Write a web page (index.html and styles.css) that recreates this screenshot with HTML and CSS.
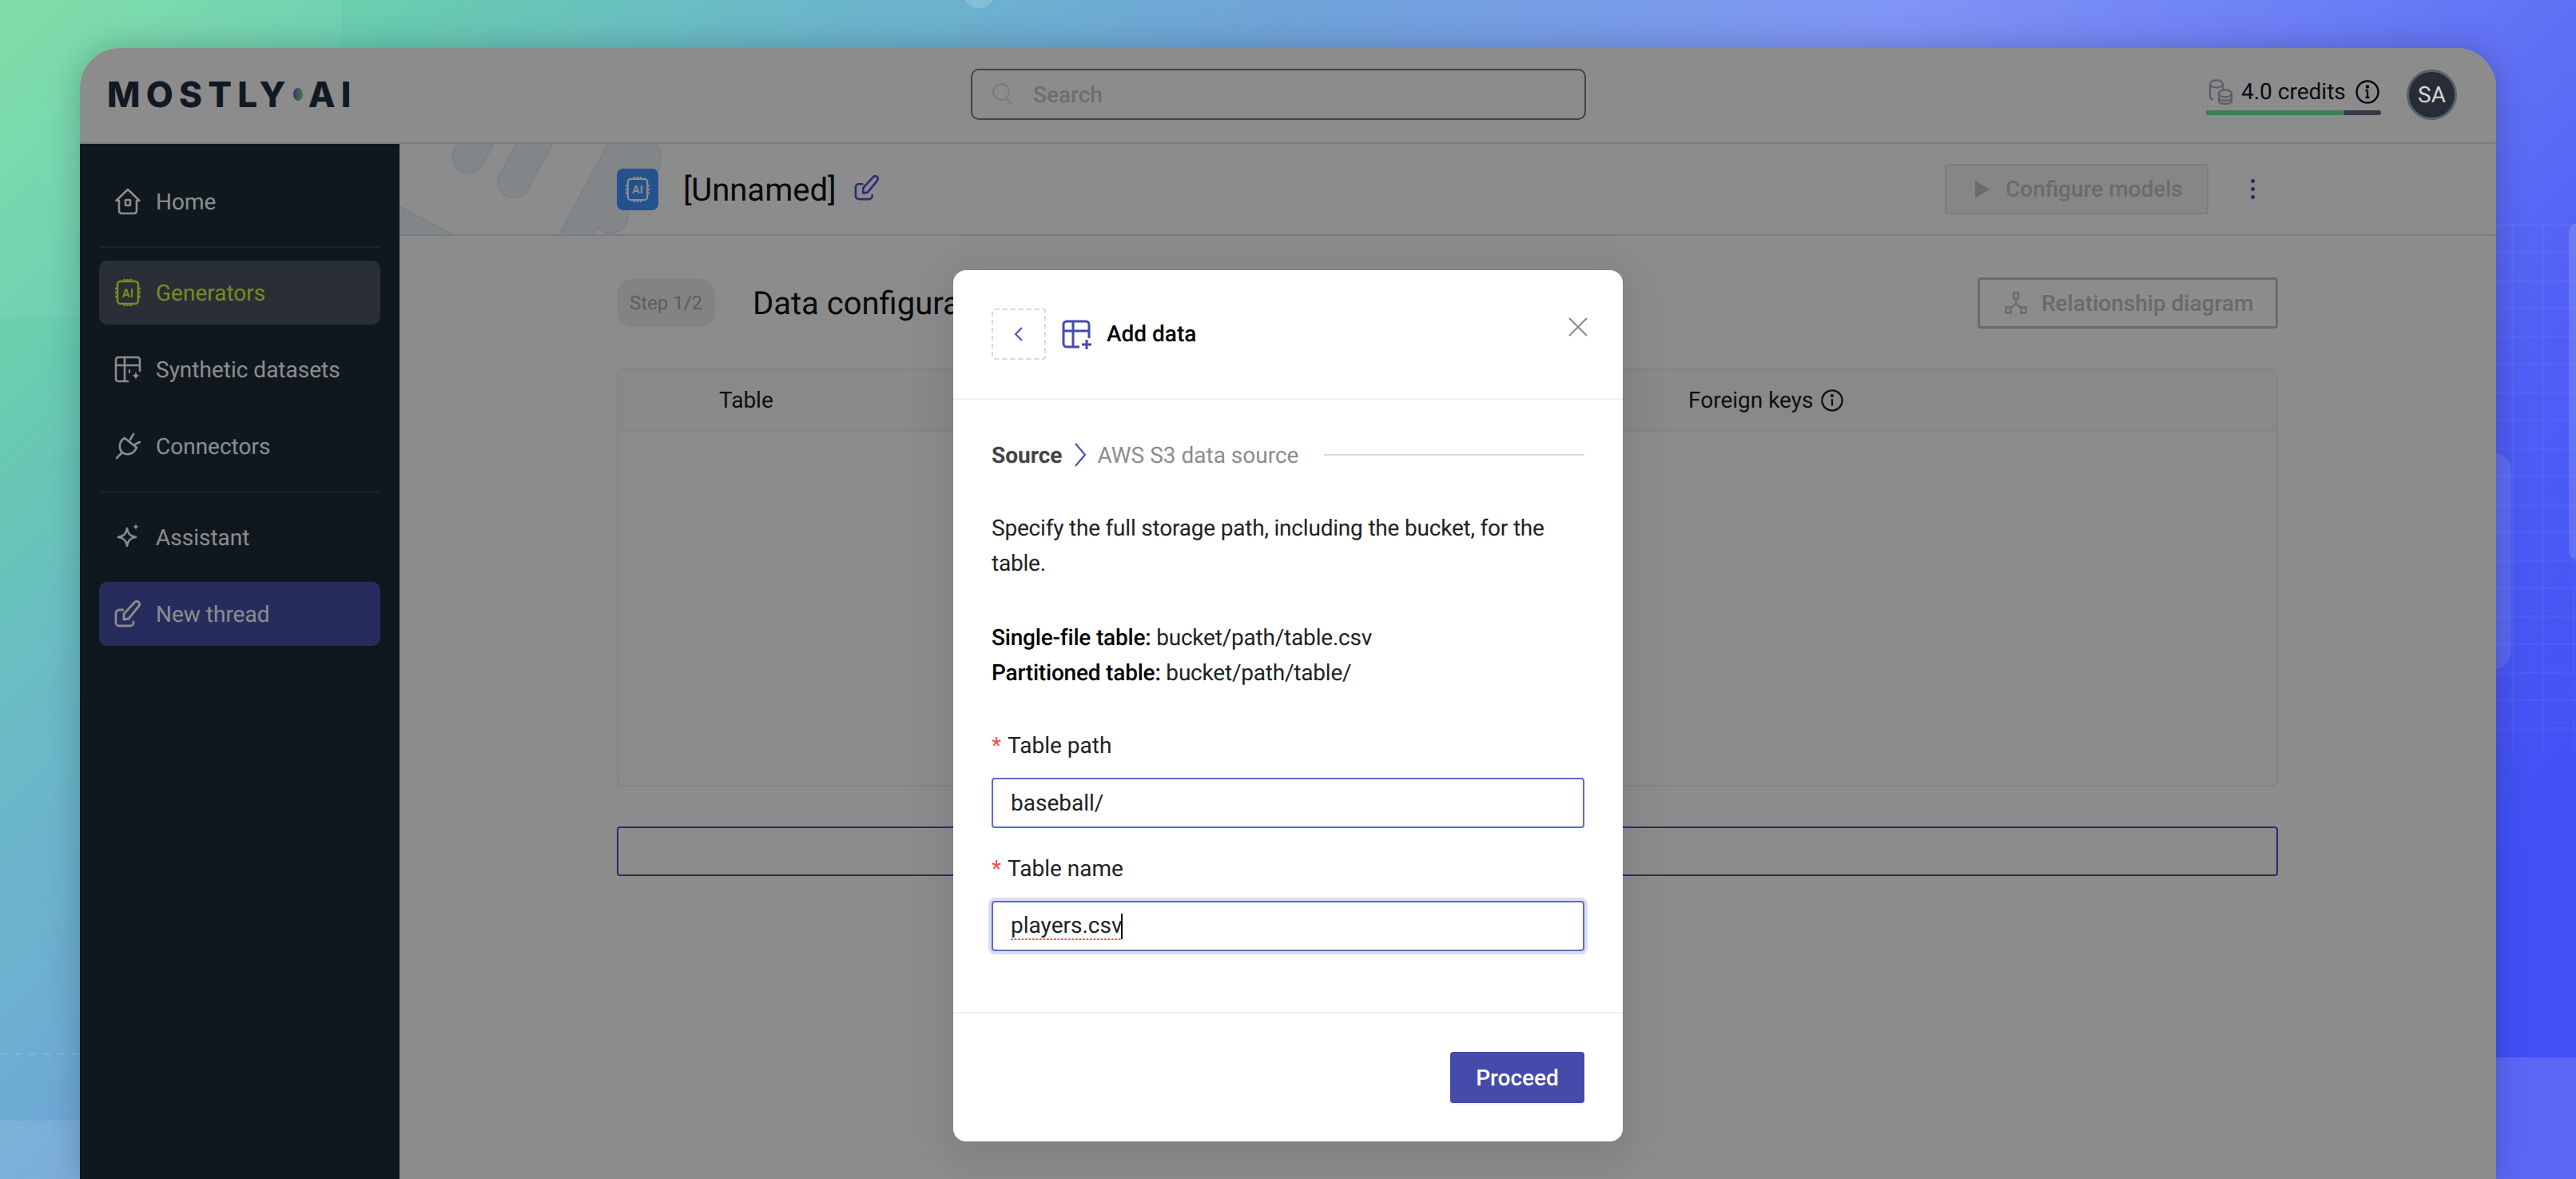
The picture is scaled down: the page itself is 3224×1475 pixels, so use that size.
FILE: index.html
```html
<!DOCTYPE html>
<html lang="en">
<head>
    <meta charset="UTF-8">
    <meta name="viewport" content="width=device-width, initial-scale=1.0">
    <title>Add data</title>
    <link rel="stylesheet" href="styles.css">
</head>
<body>

    <!-- backdrop decoration -->
    <div class="deco deco-panel-top"></div>
    <div class="deco deco-circle"></div>
    <div class="deco deco-band-left"></div>
    <div class="deco deco-band-right"></div>
    <div class="deco deco-grid"></div>
    <div class="deco deco-tab-right"></div>
    <div class="deco deco-tab-inner"></div>
    <div class="deco deco-dash"></div>

    <div class="window">
        <header class="topbar">
            <div class="logo">MOSTLY<span class="logo-dot"></span>AI</div>
            <div class="search">
                <svg class="search-icon" viewBox="0 0 28 28" fill="none" stroke="currentColor" stroke-width="2"><circle cx="12" cy="11" r="10"/><path d="M18 19l8 8"/></svg>
                <span>Search</span>
            </div>
            <div class="topbar-right">
                <div class="credits">
                    <div class="credits-row">
                        <svg class="coins" viewBox="0 0 32 32" fill="none" stroke="currentColor" stroke-width="2.4"><ellipse cx="11" cy="6" rx="8" ry="4.5"/><path d="M3 6v16c0 2 2 3 4 3.5M19 6v6"/><ellipse cx="22" cy="18" rx="8" ry="4.5"/><path d="M14 18v9c0 2.500 3.500 4 8 4s8-1.500 8-4v-9M14 23c0 2.500 3.500 4 8 4s8-1.500 8-4"/></svg>
                        <span class="credits-text">4.0 credits</span>
                        <svg class="info" viewBox="0 0 30 30" fill="none" stroke="currentColor" stroke-width="2.4"><circle cx="15" cy="15" r="13.500"/><path d="M15 13v9M12.500 13H15M12.500 22h5"/><circle cx="15" cy="8.500" r="1" fill="currentColor"/></svg>
                    </div>
                    <div class="credits-bar"><div class="credits-fill"></div></div>
                </div>
                <div class="avatar">SA</div>
            </div>
        </header>

        <div class="app-body">
            <aside class="sidebar">
                <a class="nav-item">
                    <svg class="nav-icon" viewBox="0 0 34 34" fill="none" stroke="currentColor" stroke-width="2.6" stroke-linejoin="round"><path d="M17 2L2.500 16H6v13a3 3 0 0 0 3 3h16a3 3 0 0 0 3-3V16h3.500z"/><rect x="14" y="15" width="6" height="7" rx="1"/></svg>
                    Home
                </a>
                <div class="nav-divider"></div>
                <a class="nav-item active">
                    <svg class="nav-icon" viewBox="0 0 34 34" fill="none" stroke="currentColor" stroke-width="2.600"><rect x="4" y="3" width="26" height="28" rx="4"/><path d="M13 0v3M17 0v3M21 0v3M13 31v3M17 31v3M21 31v3M1 12h3M1 17h3M1 22h3M30 12h3M30 17h3M30 22h3"/><text x="17" y="22.500" class="chip-text" fill="currentColor" stroke="none">AI</text></svg>
                    Generators
                </a>
                <a class="nav-item">
                    <svg class="nav-icon" viewBox="0 0 34 34" fill="none" stroke="currentColor" stroke-width="2.600"><path d="M18 32H5a3 3 0 0 1-3-3V5a3 3 0 0 1 3-3h24a3 3 0 0 1 3 3v15"/><path d="M2 12h30M13 2v30"/><path d="M27 20c.6 3 2 4.400 5 5-3 .6-4.400 2-5 5-.6-3-2-4.400-5-5 3-.6 4.400-2 5-5z" fill="currentColor" stroke="none"/><path d="M19 17v5" stroke-width="2"/></svg>
                    Synthetic datasets
                </a>
                <a class="nav-item">
                    <svg class="nav-icon" viewBox="0 0 34 34" fill="none" stroke="currentColor" stroke-width="2.600" stroke-linecap="round"><path d="M3 32l7-7M20 9l4-7M26 15l6-3"/><path d="M13 7c-7 4-8 13-3 18 5 4 14 3 18-6z"/></svg>
                    Connectors
                </a>
                <div class="nav-divider second"></div>
                <a class="nav-item">
                    <svg class="nav-icon" viewBox="0 0 34 34" fill="none" stroke="currentColor" stroke-width="2.600" stroke-linejoin="round"><path d="M16 6c1 7 4 10 11 11-7 1-10 4-11 11-1-7-4-10-11-11 7-1 10-4 11-11z"/><path d="M27 0c.4 2.400 1.600 3.600 4 4-2.400.4-3.600 1.600-4 4-.4-2.400-1.600-3.600-4-4 2.400-.4 3.600-1.600 4-4z" fill="currentColor" stroke="none"/></svg>
                    Assistant
                </a>
                <a class="nav-item selected">
                    <svg class="nav-icon" viewBox="0 0 34 34"><use href="#edit-shape"/></svg>
                    New thread
                </a>
            </aside>

            <main class="main">
                <div class="toolbar">
                    <svg class="toolbar-pattern" viewBox="0 0 400 113" preserveAspectRatio="none">
                        <path d="M-2 77L68 115H-2z"/>
                        <path d="M73 -2L67.600 8.400A20 20 0 0 0 102.400 27.600L118.700 -2z"/>
                        <path d="M147.500 -2L124.600 39.700A20 20 0 0 0 159.400 58.900L192.900 -2z"/>
                        <path d="M199 115L262 -2H320C330 10 328 25 322 38L285 78C290 95 280 112 263 112C257 112 252 108 247 105L240 115z"/>
                    </svg>
                    <div class="gen-icon">
                        <svg viewBox="0 0 34 34" fill="none" stroke="currentColor" stroke-width="2.400"><rect x="4" y="3" width="26" height="28" rx="4"/><path d="M13 0v3M17 0v3M21 0v3M13 31v3M17 31v3M21 31v3M1 12h3M1 17h3M1 22h3M30 12h3M30 17h3M30 22h3"/><text x="17" y="22.500" class="chip-text" fill="currentColor" stroke="none">AI</text></svg>
                    </div>
                    <span class="gen-name">[Unnamed]</span>
                    <svg class="gen-edit" viewBox="0 0 34 34"><use href="#edit-shape"/></svg>
                    <button class="btn-disabled">
                        <svg class="play" viewBox="0 0 18 22"><path d="M0 0l18 11L0 22z" fill="currentColor"/></svg>
                        Configure models
                    </button>
                    <div class="dots"><i></i><i></i><i></i></div>
                </div>

                <div class="content">
                    <div class="step-row">
                        <span class="step-pill">Step 1/2</span>
                        <h2 class="step-title">Data configuration</h2>
                        <button class="btn-outline">
                            <svg class="rel-icon" viewBox="0 0 28 28" fill="none" stroke="currentColor" stroke-width="2.400"><rect x="11" y="1.500" width="6" height="7"/><rect x="1.500" y="19.500" width="6" height="7"/><rect x="20.500" y="19.500" width="6" height="7"/><path d="M14 8.500V15L6 21M14 15l8 6"/></svg>
                            Relationship diagram
                        </button>
                    </div>

                    <div class="data-table">
                        <div class="data-head">
                            <div class="col-table">Table</div>
                            <div class="col-keys">Foreign keys
                                <svg class="info-small" viewBox="0 0 30 30" fill="none" stroke="currentColor" stroke-width="2.400"><circle cx="15" cy="15" r="13.500"/><path d="M15 13v9"/><circle cx="15" cy="8.500" r="1" fill="currentColor"/></svg>
                            </div>
                        </div>
                    </div>

                    <div class="add-box"></div>
                </div>
            </main>
        </div>

        <div class="mask"></div>
    </div>

    <div class="modal-wrap">
        <div class="modal">
            <div class="modal-head">
                <div class="back-btn">
                    <svg viewBox="0 0 12 20" fill="none" stroke="currentColor" stroke-width="2"><path d="M10 2L2 10l8 8"/></svg>
                </div>
                <svg class="add-icon" viewBox="0 0 38 38" fill="none" stroke="currentColor" stroke-width="3"><path d="M22 34H6a4 4 0 0 1-4-4V6a4 4 0 0 1 4-4h24a4 4 0 0 1 4 4v17"/><path d="M2 14h32M14 2v32"/><path d="M31 25v12M25 31h12"/></svg>
                <span class="modal-title">Add data</span>
                <svg class="close-x" viewBox="0 0 24 24" fill="none" stroke="currentColor" stroke-width="2.200"><path d="M1 1l22 22M23 1L1 23"/></svg>
            </div>

            <div class="modal-body">
                <div class="crumbs">
                    <strong>Source</strong>
                    <svg class="crumb-arrow" viewBox="0 0 14 30" fill="none" stroke="currentColor" stroke-width="2.200"><path d="M1 1l12 14L1 29"/></svg>
                    <span class="crumb-now">AWS S3 data source</span>
                    <span class="crumb-line"></span>
                </div>

                <p class="intro">Specify the full storage path, including the bucket, for the table.</p>

                <p class="examples">
                    <b>Single-file table:</b> bucket/path/table.csv<br>
                    <b>Partitioned table:</b> bucket/path/table/
                </p>

                <label class="field-label"><span class="req">*</span>Table path</label>
                <div class="field">baseball/</div>

                <label class="field-label second"><span class="req">*</span>Table name</label>
                <div class="field focused"><span class="misspelt">players.csv</span><span class="caret"></span></div>
            </div>

            <div class="modal-foot">
                <button class="btn-primary">Proceed</button>
            </div>
        </div>
    </div>

    <svg class="defs" width="0" height="0">
        <symbol id="edit-shape" viewBox="0 0 34 34">
            <g fill="none" stroke="currentColor" stroke-width="2.800" stroke-linejoin="round" stroke-linecap="round">
                <path d="M11 12H6a4 4 0 0 0-4 4v12a4 4 0 0 0 4 4h14a4 4 0 0 0 4-4v-1"/>
                <path d="M12 24v-7L25 3a3.500 3.500 0 0 1 6 4L18 23z"/>
            </g>
        </symbol>
    </svg>

</body>
</html>
```
FILE: styles.css
```css
* {
    box-sizing: border-box;
}

html, body {
    margin: 0;
    padding: 0;
    height: 1475px;
    overflow: hidden;
}

body {
    position: relative;
    font-family: Roboto, "Liberation Sans", sans-serif;
    font-size: 28px;
    color: #111;
    text-rendering: geometricPrecision;
    background: linear-gradient(135deg, #7adea4 0%, #68ccb0 11%, #6ab8c8 21%, #6fa5d8 34%, #7f94f5 51%, #5f70f5 69%, #4f5ff5 77%, #4050f5 90%, #4050f5 100%);
}

/* backdrop */
.deco {
    position: absolute;
}

.deco-panel-top {
    left: 0;
    top: 0;
    width: 428px;
    height: 398px;
    background: rgba(255, 255, 255, 0.05);
}

.deco-circle {
    left: 1204px;
    top: -32px;
    width: 42px;
    height: 42px;
    border-radius: 50%;
    background: rgba(255, 255, 255, 0.18);
}

.deco-band-left {
    left: 0;
    top: 1402px;
    width: 110px;
    height: 73px;
    background: rgba(255, 255, 255, 0.09);
}

.deco-band-right {
    left: 3110px;
    top: 1323px;
    width: 114px;
    height: 152px;
    background: rgba(255, 255, 255, 0.14);
}

.deco-grid {
    left: 3110px;
    top: 280px;
    width: 114px;
    height: 660px;
    background-image:
        linear-gradient(rgba(255, 255, 255, 0.04) 2px, transparent 2px),
        linear-gradient(90deg, rgba(255, 255, 255, 0.035) 2px, transparent 2px);
    background-size: 38px 35px;
    background-position: -4px 0;
}

.deco-tab-right {
    left: 3215px;
    top: 280px;
    width: 30px;
    height: 420px;
    border-radius: 10px;
    background: rgba(255, 255, 255, 0.14);
}

.deco-tab-inner {
    left: 3090px;
    top: 566px;
    width: 53px;
    height: 272px;
    border-radius: 24px;
    background: rgba(255, 255, 255, 0.1);
}

.deco-dash {
    left: 0;
    top: 1317px;
    width: 110px;
    height: 3px;
    background-image: linear-gradient(90deg, rgba(255, 255, 255, 0.1) 50%, transparent 50%);
    background-size: 18px 3px;
}

/* app window */
.window {
    position: relative;
    width: 3024px;
    height: 1415px;
    margin: 60px 0 0 100px;
    border-radius: 50px 50px 0 0;
    background: #fff;
    box-shadow: 0 0 40px rgba(0, 0, 0, 0.22);
    overflow: hidden;
}

.mask {
    position: absolute;
    inset: 0;
    z-index: 4;
    background: rgba(0, 0, 0, 0.45);
}

.topbar {
    display: grid;
    grid-template-columns: 1081px 770px 1fr;
    align-items: center;
    height: 120px;
    padding-left: 34px;
    padding-bottom: 2px;
    border-bottom: 2px solid #e4e4ea;
}

.logo {
    display: flex;
    align-items: center;
    font-family: Inter, sans-serif;
    font-size: 44px;
    font-weight: 800;
    letter-spacing: 7.200px;
    color: #1f2f40;
    line-height: 1;
}

.logo-dot {
    width: 12px;
    height: 16px;
    margin: 0 7px 0 2px;
    border-radius: 50%;
    background: linear-gradient(90deg, #5566dd, #88dd66);
}

.search {
    display: flex;
    align-items: center;
    gap: 24px;
    height: 64px;
    padding-left: 24px;
    border: 2px solid #737c91;
    border-radius: 10px;
    color: #c8c8c8;
    font-weight: 500;
}

.search-icon {
    width: 28px;
    height: 28px;
    color: #e0e0e0;
}

.topbar-right {
    display: flex;
    justify-content: flex-end;
    align-items: center;
    gap: 32px;
    padding-right: 49px;
}

.credits {
    width: 219px;
    margin-top: 7px;
}

.credits-row {
    display: flex;
    align-items: center;
    padding-left: 2px;
    height: 32px;
    margin-bottom: 7px;
}

.coins {
    width: 32px;
    height: 32px;
    color: #aab0bf;
}

.credits-text {
    margin-left: 10px;
    color: #121225;
    line-height: 30px;
}

.info {
    width: 30px;
    height: 30px;
    margin-left: 12px;
    color: #121225;
}

.credits-bar {
    height: 6px;
    border-radius: 3px;
    background: #636a82;
    overflow: hidden;
}

.credits-fill {
    width: 79%;
    height: 100%;
    background: #6ce8a0;
}

.avatar {
    position: relative;
    z-index: 5;
    display: flex;
    align-items: center;
    justify-content: center;
    width: 63px;
    height: 63px;
    border: 3px solid #5a5f6b;
    border-radius: 50%;
    background: #282c36;
    color: #d8d8d8;
}

.app-body {
    display: flex;
    height: 1295px;
}

/* sidebar */
.sidebar {
    display: flex;
    flex-direction: column;
    gap: 16px;
    flex: 0 0 400px;
    padding: 32px 24px;
    background: #1d2c38;
}

.nav-item {
    display: flex;
    align-items: center;
    gap: 18px;
    height: 80px;
    padding-left: 19px;
    border-radius: 10px;
    color: #fff;
}

.nav-item.active {
    background: #4c5464;
    color: #d9ff3a;
}

.nav-item.selected {
    background: #4550ab;
}

.nav-icon {
    flex: none;
    width: 34px;
    height: 34px;
}

.chip-text {
    font-family: Roboto, sans-serif;
    font-size: 15px;
    font-weight: 700;
    text-anchor: middle;
}

.nav-divider {
    height: 2px;
    background: #353c4e;
}

/* main area */
.main {
    flex: 1;
    background: #fff;
}

.toolbar {
    position: relative;
    display: flex;
    align-items: center;
    height: 115px;
    padding: 0 302px 0 272px;
    border-bottom: 2px solid #e4e4ea;
}

.toolbar-pattern {
    position: absolute;
    left: 0;
    top: 0;
    width: 400px;
    height: 113px;
    fill: #edf4f8;
    stroke: #e2ecf2;
    stroke-width: 2;
}

.gen-icon {
    position: relative;
    display: flex;
    align-items: center;
    justify-content: center;
    width: 52px;
    height: 52px;
    border-radius: 8px;
    background: #4095ff;
    color: #fff;
}

.gen-icon svg {
    width: 32px;
    height: 32px;
}

.gen-name {
    position: relative;
    top: 1px;
    margin-left: 31px;
    font-size: 40px;
    color: #111;
}

.gen-edit {
    position: relative;
    width: 32px;
    height: 32px;
    margin-left: 22px;
    margin-top: -4px;
    color: #4c56d8;
}

.btn-disabled {
    position: relative;
    display: flex;
    align-items: center;
    gap: 20px;
    width: 330px;
    height: 63px;
    margin-left: auto;
    padding: 0 0 0 36px;
    border: 2px solid #e2e2e2;
    border-radius: 4px;
    background: #f5f5f5;
    color: #c4c4c4;
    font: 500 28px Roboto, sans-serif;
}

.play {
    width: 18px;
    height: 22px;
}

.dots {
    display: flex;
    flex-direction: column;
    gap: 5px;
    margin-left: 53px;
}

.dots i {
    width: 5px;
    height: 5px;
    border-radius: 50%;
    background: #4a52c0;
}

.content {
    width: 2079px;
    margin-left: 272px;
    padding-top: 52px;
}

.step-row {
    display: flex;
    align-items: center;
    height: 64px;
}

.step-pill {
    display: flex;
    align-items: center;
    justify-content: center;
    width: 123px;
    height: 60px;
    border-radius: 20px;
    background: #eeeeee;
    color: #aaa;
    font-size: 24px;
}

.step-title {
    margin: 0 0 0 47px;
    font-size: 40px;
    font-weight: 400;
    color: #111;
}

.btn-outline {
    display: flex;
    align-items: center;
    gap: 18px;
    width: 376px;
    height: 64px;
    margin-left: auto;
    padding: 0 0 0 31px;
    border: 3px solid #c3c3c3;
    border-radius: 4px;
    background: transparent;
    color: #c2c2c2;
    font: 500 28px Roboto, sans-serif;
}

.rel-icon {
    width: 28px;
    height: 28px;
}

.data-table {
    height: 523px;
    margin-top: 50px;
    border: 2px solid #f0f0f0;
    border-radius: 8px;
}

.data-head {
    display: flex;
    align-items: center;
    height: 77px;
    border-bottom: 2px solid #f0f0f0;
    background: #fafafa;
    color: #1a1a1a;
}

.col-table {
    width: 1339px;
    padding-left: 126px;
}

.col-keys {
    display: flex;
    align-items: center;
    gap: 10px;
}

.info-small {
    width: 28px;
    height: 28px;
}

.add-box {
    height: 62px;
    margin-top: 50px;
    border: 2px solid #4a52c0;
    border-radius: 4px;
}

/* modal */
.modal-wrap {
    position: absolute;
    inset: 0;
    z-index: 10;
    display: flex;
    justify-content: center;
    padding-top: 338px;
}

.modal {
    width: 838px;
    height: 1090px;
    border-radius: 16px;
    background: #fff;
    box-shadow: 0 12px 48px 16px rgba(0, 0, 0, 0.08);
}

.modal-head {
    position: relative;
    display: flex;
    align-items: flex-start;
    height: 162px;
    padding: 48px 48px 0;
    border-bottom: 2px solid #f0f0f0;
}

.back-btn {
    display: flex;
    align-items: center;
    justify-content: center;
    width: 68px;
    height: 64px;
    border: 2px dashed #d9d9d9;
    border-radius: 4px;
    color: #4a50b8;
}

.back-btn svg {
    width: 12px;
    height: 20px;
}

.add-icon {
    width: 38px;
    height: 38px;
    margin: 14px 18px 0 20px;
    color: #454bab;
}

.modal-title {
    margin-top: 12px;
    font-weight: 500;
    line-height: 40px;
    color: #000;
}

.close-x {
    position: absolute;
    left: 770px;
    top: 59px;
    width: 24px;
    height: 24px;
    color: #8c8c8c;
}

.modal-body {
    height: 766px;
    padding: 49px 48px 0;
}

.crumbs {
    display: flex;
    align-items: center;
    height: 40px;
}

.crumbs strong {
    font-weight: 700;
    color: #444;
}

.crumb-arrow {
    width: 14px;
    height: 30px;
    margin: 0 14px 0 16px;
    color: #4a50b8;
}

.crumb-now {
    color: #8c8c8c;
}

.crumb-line {
    flex: 1;
    height: 2px;
    margin-left: 32px;
    background: #d9d9d9;
}

.intro {
    margin: 50px 0 0;
    line-height: 44px;
    letter-spacing: -0.2px;
    color: #222;
}

.examples {
    margin: 49px 0 0;
    line-height: 44px;
    letter-spacing: -0.2px;
    color: #222;
}

.examples b {
    font-weight: 500;
    color: #000;
}

.field-label {
    display: block;
    margin-top: 49px;
    line-height: 40px;
    color: #222;
}

.field-label.second {
    margin-top: 31px;
}

.req {
    margin-right: 8px;
    color: #f25555;
}

.field {
    display: flex;
    align-items: center;
    height: 63px;
    margin-top: 20px;
    padding-left: 22px;
    border: 2px solid #5b6bc8;
    border-radius: 4px;
    color: #222;
}

.field.focused {
    box-shadow: 0 0 0 4px #dcdff2;
}

.misspelt {
    padding-bottom: 2px;
    background-image: linear-gradient(90deg, #ee5f5f 60%, transparent 60%);
    background-size: 4.500px 2px;
    background-repeat: repeat-x;
    background-position: 0 100%;
}

.caret {
    width: 2px;
    height: 32px;
    margin-left: -1px;
    background: #111;
}

.modal-foot {
    display: flex;
    justify-content: flex-end;
    height: 162px;
    padding: 48px 48px 0;
    border-top: 2px solid #f0f0f0;
}

.btn-primary {
    width: 168px;
    height: 64px;
    border: none;
    border-radius: 4px;
    background: #454bab;
    color: #fff;
    font: 500 28px Roboto, sans-serif;
    box-shadow: 0 2px 0 rgba(0, 0, 0, 0.04);
}

.defs {
    position: absolute;
}
```
